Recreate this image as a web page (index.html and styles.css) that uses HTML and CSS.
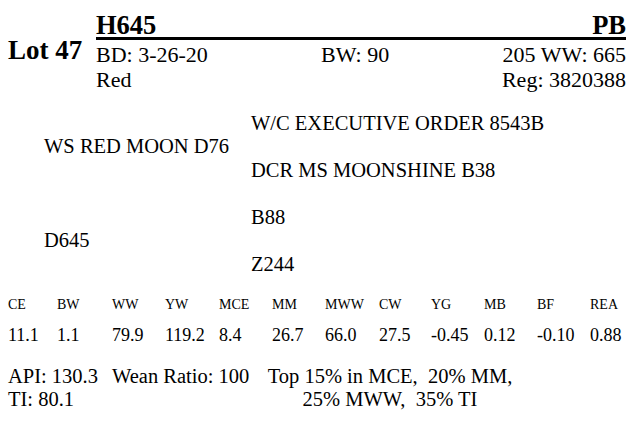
FILE: index.html
```html
<!DOCTYPE html>
<html lang="en">
<head>
    <meta charset="UTF-8">
    <meta name="viewport" content="width=device-width, initial-scale=1.0">
    <title>Lot 47 - H645</title>
    <link rel="stylesheet" href="styles.css">
</head>
<body>
    <div class="sheet">
        <!-- Lot header -->
        <div class="lot-head">
            <div class="lot-no">Lot 47</div>
            <div class="lot-info">
                <div class="title-row">
                    <span>H645</span>
                    <span>PB</span>
                </div>
                <div class="info-grid">
                    <span>BD: 3-26-20</span>
                    <span>BW: 90</span>
                    <span class="right">205 WW: 665</span>
                    <span>Red</span>
                    <span></span>
                    <span class="right">Reg: 3820388</span>
                </div>
            </div>
        </div>

        <!-- Pedigree -->
        <div class="pedigree">
            <div class="ped-block">
                <div class="ped-parent">WS RED MOON D76</div>
                <div class="ped-grand">W/C EXECUTIVE ORDER 8543B</div>
                <div class="ped-grand">DCR MS MOONSHINE B38</div>
            </div>
            <div class="ped-block">
                <div class="ped-parent">D645</div>
                <div class="ped-grand">B88</div>
                <div class="ped-grand">Z244</div>
            </div>
        </div>

        <!-- EPDs -->
        <div class="epds">
            <span class="epd-label">CE</span>
            <span class="epd-label">BW</span>
            <span class="epd-label">WW</span>
            <span class="epd-label">YW</span>
            <span class="epd-label">MCE</span>
            <span class="epd-label">MM</span>
            <span class="epd-label">MWW</span>
            <span class="epd-label">CW</span>
            <span class="epd-label">YG</span>
            <span class="epd-label">MB</span>
            <span class="epd-label">BF</span>
            <span class="epd-label">REA</span>
            <span class="epd-value">11.1</span>
            <span class="epd-value">1.1</span>
            <span class="epd-value">79.9</span>
            <span class="epd-value">119.2</span>
            <span class="epd-value">8.4</span>
            <span class="epd-value">26.7</span>
            <span class="epd-value">66.0</span>
            <span class="epd-value">27.5</span>
            <span class="epd-value">-0.45</span>
            <span class="epd-value">0.12</span>
            <span class="epd-value">-0.10</span>
            <span class="epd-value">0.88</span>
        </div>

        <!-- Index values -->
        <div class="foot">
            <div class="foot-index">API: 130.3<br>TI: 80.1</div>
            <div class="foot-wean">Wean Ratio: 100</div>
            <div class="foot-top">Top 15% in MCE,&nbsp; 20% MM,<br>25% MWW,&nbsp; 35% TI</div>
        </div>
    </div>
</body>
</html>
```

FILE: styles.css
```css
body {
    margin: 0;
    background-color: #fff;
    color: #000;
    font-family: "Liberation Serif", "Times New Roman", serif;
}

.sheet {
    padding: 13px 13px 0 8px;
}

.lot-head {
    display: flex;
}
.lot-no {
    width: 88px;
    padding-top: 22px;
    font-size: 27px;
    font-weight: bold;
    line-height: 30px;
}
.lot-info {
    flex: 1;
}
.title-row {
    display: flex;
    justify-content: space-between;
    font-size: 26.5px;
    font-weight: bold;
    line-height: 24px;
    border-bottom: 3px solid #000;
}
.info-grid {
    display: grid;
    grid-template-columns: 225px 1fr auto;
    margin-top: 2px;
    font-size: 22px;
    line-height: 25px;
}
.info-grid .right {
    text-align: right;
}

.pedigree {
    margin-top: 7px;
    font-size: 20.5px;
    line-height: 24px;
}
.ped-block {
    display: grid;
    grid-template-columns: 243px auto;
    grid-template-rows: 47px 47px;
    align-items: center;
}
.ped-parent {
    grid-row: 1 / 3;
    padding-left: 36px;
    white-space: nowrap;
}
.ped-grand {
    grid-column: 2;
}

.epds {
    display: grid;
    grid-template-columns: 49px 55px 53px 54px 53px 53px 54px 52px 53px 53px 53px auto;
    margin-top: 9px;
}
.epd-label {
    font-size: 14px;
    line-height: 18px;
    margin-bottom: 10px;
}
.epd-value {
    font-size: 18px;
    line-height: 22px;
}

.foot {
    display: flex;
    margin-top: 19px;
    font-size: 20.5px;
    line-height: 23px;
}
.foot-index {
    width: 104px;
}
.foot-wean {
    width: 150px;
}
.foot-top {
    width: 256px;
    text-align: center;
    white-space: nowrap;
}
```
